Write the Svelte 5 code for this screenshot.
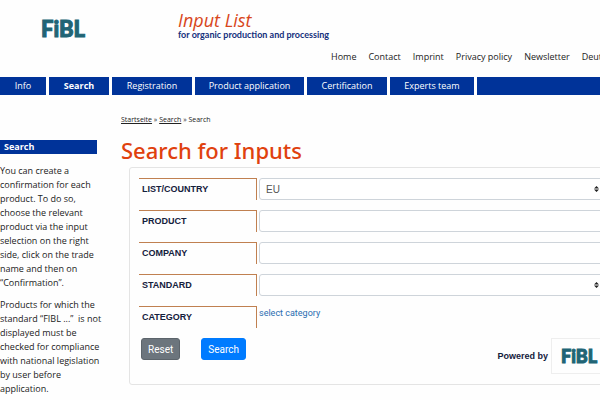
<script>
    const links = ['Home', 'Contact', 'Imprint', 'Privacy policy', 'Newsletter', 'Deutsch']
    const tabs = [
        { name: 'Info', width: 46 },
        { name: 'Search', width: 60, active: true },
        { name: 'Registration', width: 80 },
        { name: 'Product application', width: 109 },
        { name: 'Certification', width: 80 },
        { name: 'Experts team', width: 84 }
    ]
    const rows = [
        { id: 'list', label: 'LIST/COUNTRY', type: 'select', options: ['EU'] },
        { id: 'product', label: 'PRODUCT', type: 'text' },
        { id: 'company', label: 'COMPANY', type: 'text' },
        { id: 'standard', label: 'STANDARD', type: 'select', options: [''] }
    ]
</script>

<div class='page'>
    <header>
        <a class='logo' href='#fibl'>FiBL</a>
        <div class='brand'>
            <div class='name'>Input List</div>
            <div class='claim'>for organic production and processing</div>
        </div>
    </header>
    <nav class='meta'>
        {#each links as link}
            <a href='#{link}'>{link}</a>
        {/each}
    </nav>
    <nav class='tabs'>
        {#each tabs as tab}
            <a href='#{tab.name}' class:active={tab.active} style='width:{tab.width}px'>{tab.name}</a>
        {/each}
        <span class='rest'></span>
    </nav>

    <div class='columns'>
        <aside>
            <h2>Search</h2>
            <p>You can create a<br>confirmation for each<br>product. To do so,<br>choose the relevant<br>product via the input<br>selection on the right<br>side, click on the trade<br>name and then on<br>“Confirmation”.</p>
            <p>Products for which the<br>standard “FIBL ...”&nbsp; is not<br>displayed must be<br>checked for compliance<br>with national legislation<br>by user before<br>application.</p>
        </aside>

        <main>
            <div class='crumbs'><a href='#start'>Startseite</a> » <a href='#search'>Search</a> » Search</div>
            <h1>Search for Inputs</h1>
            <form>
                {#each rows as row}
                    <div class='row'>
                        <label for={row.id}>{row.label}</label>
                        {#if row.type === 'select'}
                            <div class='field'>
                                <select id={row.id}>
                                    {#each row.options as option}
                                        <option>{option}</option>
                                    {/each}
                                </select>
                                <svg viewBox='0 0 5 6' width='5' height='6'>
                                    <path d='M2.5 0L5 2.5H0zM2.5 6L0 3.5H5z' fill='#222' />
                                </svg>
                            </div>
                        {:else}
                            <div class='field'><input id={row.id} type='text'></div>
                        {/if}
                    </div>
                {/each}
                <div class='row'>
                    <span class='label'>CATEGORY</span>
                    <a class='category' href='#category'>select category</a>
                </div>
                <div class='actions'>
                    <button type='reset'>Reset</button>
                    <button type='button' class='primary'>Search</button>
                    <div class='powered'>
                        Powered by
                        <span class='logo small'>FiBL</span>
                    </div>
                </div>
            </form>
        </main>
    </div>
</div>

<style>
    :global(body){
        margin:0;
        background:#fefefe;
    }
    .page{
        overflow:hidden;
        font-family:'Open Sans', sans-serif;
        font-size:9px;
        color:#222;
    }
    a{
        color:inherit;
        text-decoration:none;
    }
    header{
        display:flex;
        padding:10px 0 0 41px;
    }
    .logo{
        width:137px;
        padding-top:5px;
        font-family:Lato, sans-serif;
        font-size:22px;
        line-height:28px;
        font-weight:900;
        color:#216475;
        -webkit-text-stroke:1px #216475;
    }
    .name{
        font-size:18px;
        line-height:20px;
        font-style:italic;
        color:#d8461b;
    }
    .claim{
        font-family:Lato, sans-serif;
        font-size:9px;
        line-height:10px;
        font-weight:700;
        color:#14307c;
    }
    .meta{
        display:flex;
        gap:12px;
        padding:7px 0 0 331px;
        line-height:14px;
        white-space:nowrap;
    }
    .tabs{
        display:flex;
        gap:3px;
        margin-top:13px;
        line-height:18px;
        color:#fff;
        text-align:center;
        white-space:nowrap;
    }
    .tabs a, .rest{
        flex:none;
        height:18px;
        background:#003399;
    }
    .tabs .rest{
        flex:1;
    }
    .active{
        font-weight:700;
    }
    .columns{
        display:flex;
        gap:24px;
    }
    aside{
        flex:none;
        width:97px;
        padding-top:45px;
        white-space:nowrap;
    }
    h2{
        margin:0 0 10px;
        padding-left:4px;
        background:#003399;
        color:#fff;
        font-size:9px;
        line-height:14px;
    }
    p{
        margin:0 0 8px;
        line-height:14px;
    }
    main{
        flex:1;
        min-width:0;
    }
    .crumbs{
        padding-top:20px;
        font-size:7px;
        line-height:10px;
    }
    .crumbs a{
        text-decoration:underline;
    }
    h1{
        margin:10px 0 2px;
        font-family:'Noto Sans', sans-serif;
        font-size:22px;
        line-height:30px;
        font-weight:500;
        color:#e0410e;
    }
    form{
        display:flex;
        flex-direction:column;
        gap:10px;
        margin:0 -10px 0 8px;
        padding:10px 0 10px 9px;
        border:1px solid #e4e4e4;
        border-radius:3px;
        font-family:'Liberation Sans', sans-serif;
    }
    .row{
        display:flex;
        gap:2px;
        height:22px;
    }
    label, .label{
        box-sizing:border-box;
        width:118px;
        padding-left:3px;
        border-top:1px solid #c08050;
        border-right:1px solid #c08050;
        font-weight:700;
        line-height:21px;
        color:#14203c;
    }
    .field{
        position:relative;
        flex:1;
    }
    input, select{
        box-sizing:border-box;
        display:block;
        width:100%;
        height:22px;
        padding:0 6px;
        border:1px solid #ced4da;
        border-radius:3px;
        background:#fff;
        font-family:inherit;
        font-size:10px;
        color:#555;
        appearance:none;
    }
    svg{
        position:absolute;
        top:8px;
        right:10px;
    }
    .category{
        line-height:14px;
        font-family:Roboto, sans-serif;
        font-size:9px;
        color:#2a6db0;
    }
    .actions{
        display:flex;
        align-items:flex-start;
        gap:21px;
        padding-left:2px;
    }
    button{
        height:22px;
        padding:0 6px;
        border:1px solid #5c646b;
        border-radius:3px;
        background:#6c757d;
        color:#fff;
        font-family:Roboto, sans-serif;
        font-size:10px;
    }
    .primary{
        background:#007bff;
        border-color:#007bff;
    }
    .powered{
        display:flex;
        align-items:center;
        gap:3px;
        margin-left:auto;
        font-weight:700;
        color:#14203c;
    }
    .small{
        width:47px;
        padding:3px 0 3px 9px;
        border:1px solid #eee;
        font-size:18px;
    }
</style>
